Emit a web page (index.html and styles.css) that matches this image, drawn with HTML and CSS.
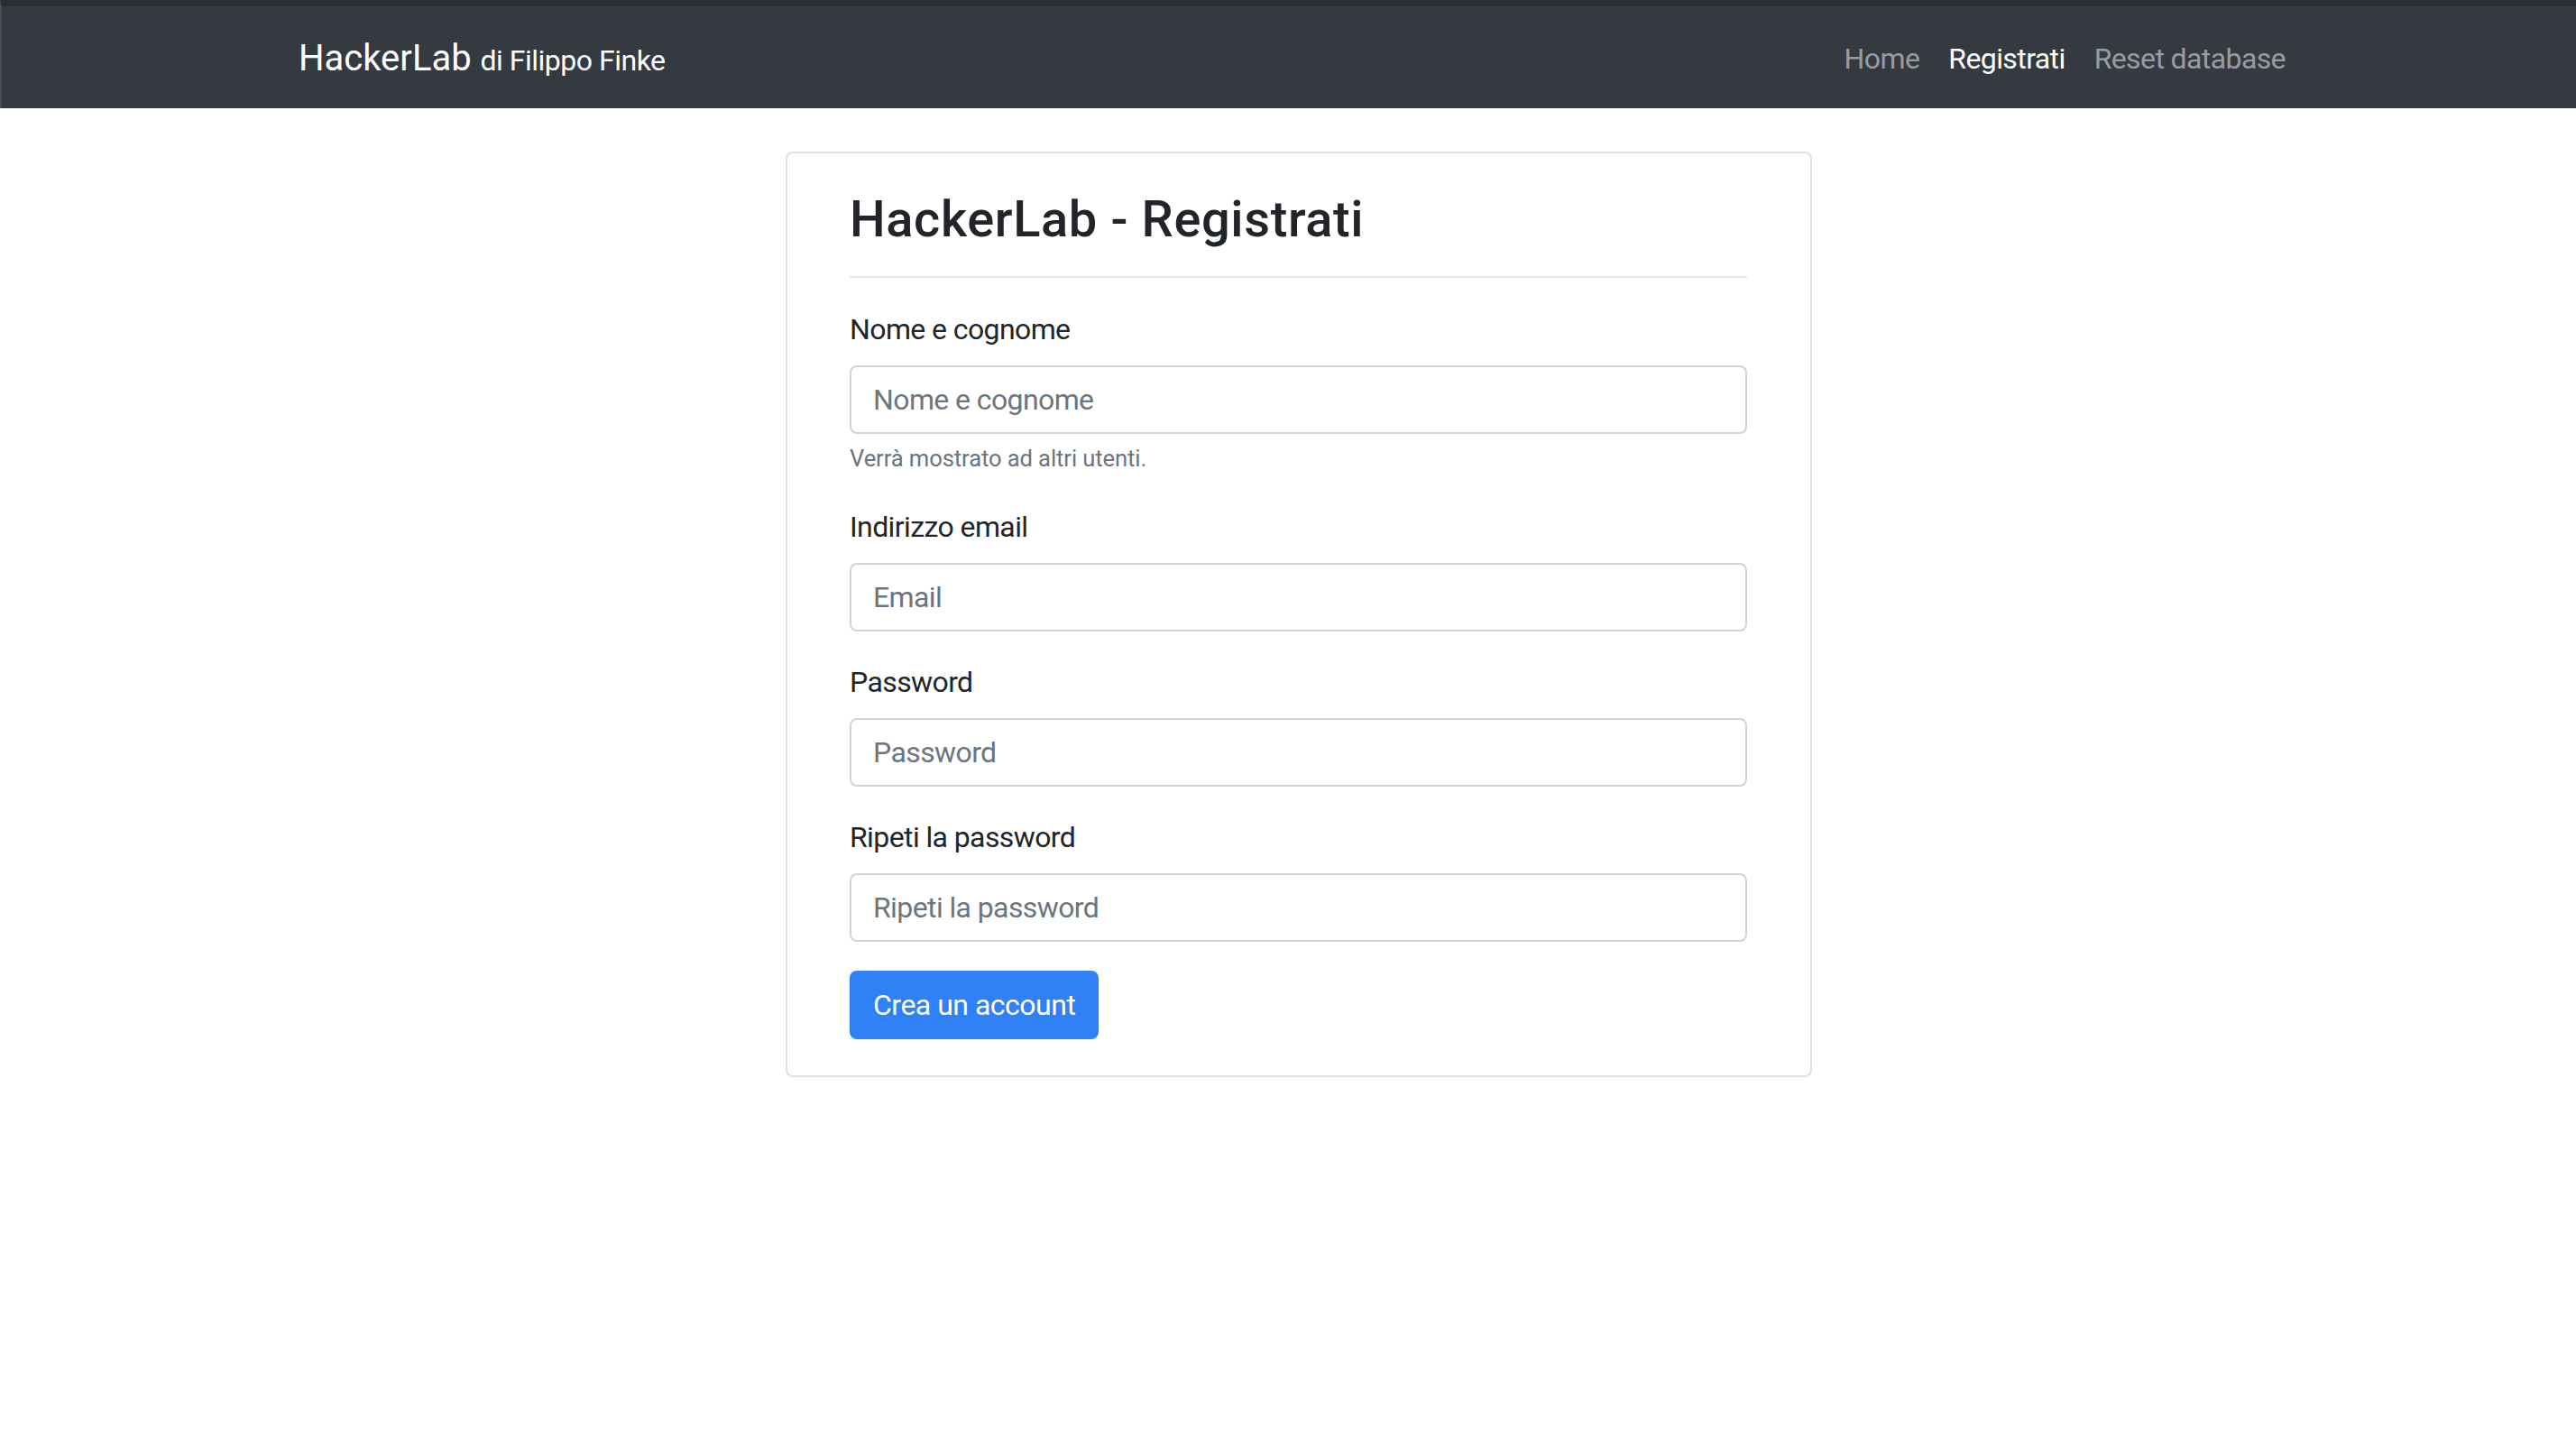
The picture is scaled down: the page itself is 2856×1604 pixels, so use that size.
FILE: index.html
```html
<!DOCTYPE html>
<html lang="it">
<head>
<meta charset="utf-8">
<title>HackerLab - Registrati</title>
<link rel="stylesheet" href="styles.css">
</head>
<body>
<nav class="navbar">
  <div class="navbar-inner">
    <a class="brand" href="#">HackerLab <small>di Filippo Finke</small></a>
    <ul class="nav">
      <li><a class="nav-link" href="#">Home</a></li>
      <li><a class="nav-link active" href="#">Registrati</a></li>
      <li><a class="nav-link" href="#">Reset database</a></li>
    </ul>
  </div>
</nav>
<main class="main">
  <div class="card">
    <h3 class="title">HackerLab - Registrati</h3>
    <hr class="divider">
    <form class="form">
      <div class="form-group">
        <label class="label">Nome e cognome</label>
        <input class="input" type="text" placeholder="Nome e cognome">
        <small class="help">Verrà mostrato ad altri utenti.</small>
      </div>
      <div class="form-group">
        <label class="label">Indirizzo email</label>
        <input class="input" type="email" placeholder="Email">
      </div>
      <div class="form-group">
        <label class="label">Password</label>
        <input class="input" type="password" placeholder="Password">
      </div>
      <div class="form-group">
        <label class="label">Ripeti la password</label>
        <input class="input" type="password" placeholder="Ripeti la password">
      </div>
      <button class="btn" type="button">Crea un account</button>
    </form>
  </div>
</main>
</body>
</html>
```
FILE: styles.css
```css
* { box-sizing: border-box; }
html, body { margin: 0; padding: 0; }
body {
  font-family: Roboto, "Liberation Sans", Arial, sans-serif;
  font-size: 32px;
  line-height: 1.5;
  letter-spacing: -0.6px;
  color: #212529;
  background: #fff;
  width: 2856px;
  height: 1604px;
  overflow: hidden;
}
.navbar {
  background: #343a40;
  border-top: 7px solid #2a2e33;
  border-left: 2px solid #4b5056;
  height: 120px;
}
.navbar-inner {
  display: flex;
  justify-content: space-between;
  align-items: center;
  height: 113px;
  padding: 2px 322px 0 329px;
}
.brand {
  color: #fff;
  text-decoration: none;
  font-size: 40px;
  line-height: 1.5;
  letter-spacing: 0;
  white-space: nowrap;
}
.brand small { font-size: 32px; letter-spacing: -0.5px; }
.nav {
  display: flex;
  list-style: none;
  margin: 0;
  padding: 0;
  margin-right: -16px;
}
.nav-link {
  display: block;
  padding: 0 16px;
  color: rgba(255,255,255,.5);
  text-decoration: none;
}
.nav-link.active { color: #fff; }
.main {
  padding: 48px 0 0 24px;
}
.card {
  width: 1138px;
  margin: 0 auto;
  border: 2px solid rgba(0,0,0,.125);
  border-radius: 8px;
  padding: 40px 70px 40px 69px;
}
.title {
  margin: 0;
  font-size: 56px;
  font-weight: 500;
  line-height: 1.2;
  letter-spacing: 0.6px;
}
.divider {
  margin: 29px 0 33px;
  border: 0;
  border-top: 2px solid rgba(0,0,0,.1);
}
.form { margin: 0; }
.form-group { margin-bottom: 32px; }
.label {
  display: block;
  margin-bottom: 16px;
}
.input {
  display: block;
  width: 100%;
  height: 76px;
  padding: 12px 24px;
  font: inherit;
  font-size: 32px;
  letter-spacing: -0.6px;
  color: #495057;
  border: 2px solid #ced4da;
  border-radius: 8px;
  background: #fff;
}
.input::placeholder { color: #6c757d; opacity: 1; }
.help {
  display: block;
  margin-top: 8px;
  font-size: 25.6px;
  letter-spacing: -0.1px;
  color: #6c757d;
}
.btn {
  display: inline-block;
  height: 76px;
  padding: 12px 24px;
  font: inherit;
  font-size: 32px;
  letter-spacing: -0.5px;
  color: #fff;
  background: #3080f6;
  border: 2px solid #3080f6;
  border-radius: 8px;
}
```
